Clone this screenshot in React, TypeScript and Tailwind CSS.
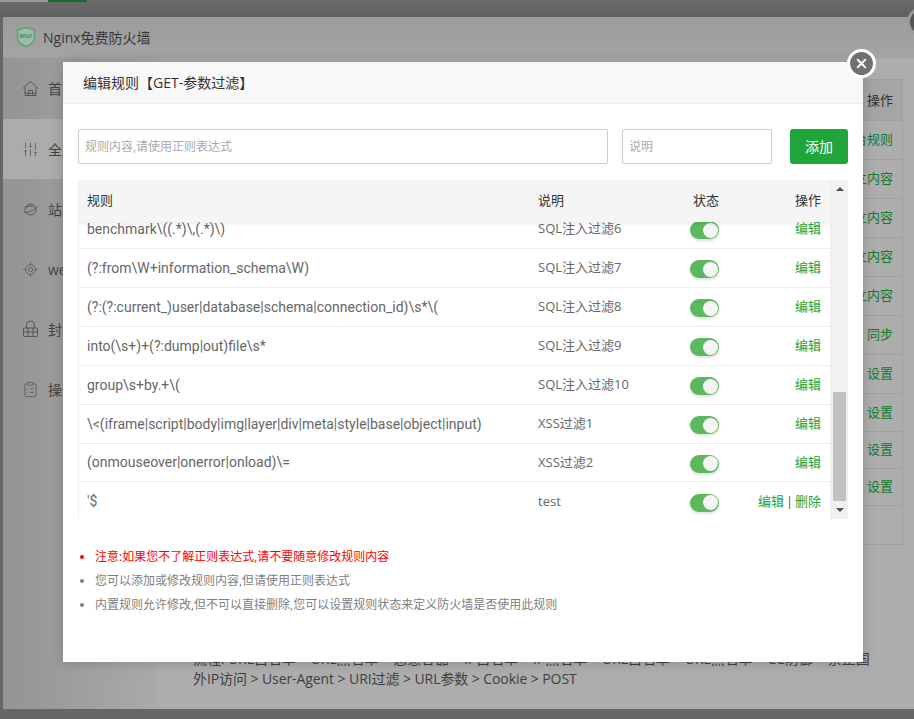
import React from "react";
import { SlidersVertical, LocateFixed, ClipboardList, X } from "lucide-react";

const font = { fontFamily: '"Open Sans","Noto Sans CJK SC",sans-serif' };
const ruleFont = { fontFamily: 'Roboto,"Noto Sans CJK SC",sans-serif' };

function HomeIcon() {
  return (
    <svg width="17" height="17" viewBox="0 0 17 17" fill="none" stroke="currentColor" strokeWidth="1">
      <path d="M0.800 8.500 8.500 1.500l7.700 7" />
      <path d="M3 7.500V15.500h11V7.500" />
      <path d="M6.500 15.500V10.500h4v5" />
      <path d="M3 13.200h11" />
    </svg>
  );
}

function Planet() {
  return (
    <svg width="17" height="17" viewBox="0 0 17 17" fill="none" stroke="currentColor" strokeWidth="1">
      <circle cx="8.500" cy="8.500" r="5.500" />
      <path d="M1.500 11c3 1.500 10-1 14-5.500" />
      <path d="M3.500 6.500c2-1.500 5-2 8-1" />
    </svg>
  );
}

function LockIcon() {
  return (
    <svg width="17" height="18" viewBox="0 0 17 18" fill="none" stroke="currentColor" strokeWidth="1">
      <path d="M4.500 8V5a4 4 0 0 1 8 0v3" />
      <rect x="1.500" y="8" width="14" height="8.500" rx="1" />
      <path d="M1.500 12h14M6 8v8.500M11 8v8.500" />
    </svg>
  );
}

function Logo() {
  return (
    <svg width="20" height="22" viewBox="0 0 20 22" fill="none">
      <path d="M10 1.500 18.500 4v7c0 5-3.500 8-8.500 9.500C5 19 1.500 16 1.500 11V4z" stroke="#5f9f73" strokeWidth="1.500" fill="#9dbda6" />
      <text x="10" y="12" textAnchor="middle" fontSize="6" fontWeight="700" fill="#4f8a62" fontFamily="Liberation Sans">WAF</text>
    </svg>
  );
}

const navItems = [
  { label: "首页", icon: <HomeIcon />, h: "h-[61px]", active: false },
  { label: "全局配置", icon: <SlidersVertical size={17} strokeWidth={1.1} />, h: "h-[60px]", active: true },
  { label: "站点配置", icon: <Planet />, h: "h-[60px]", active: false },
  { label: "web日志", icon: <LocateFixed size={17} strokeWidth={1.1} />, h: "h-[60px]", active: false },
  { label: "封锁历史", icon: <LockIcon />, h: "h-[60px]", active: false },
  { label: "操作日志", icon: <ClipboardList size={17} strokeWidth={1.1} />, h: "h-[60px]", active: false },
];

const bgRows = [
  { t: "台规则", h: "h-[39px]" },
  { t: "立内容", h: "h-[39px]" },
  { t: "立内容", h: "h-[39px]" },
  { t: "立内容", h: "h-[39px]" },
  { t: "立内容", h: "h-[39px]" },
  { t: "同步", h: "h-[39px]" },
  { t: "设置", h: "h-[39px]" },
  { t: "设置", h: "h-[38px]" },
  { t: "设置", h: "h-[37px]" },
  { t: "设置", h: "h-[37px]" },
  { t: "", h: "h-[38px]" },
];

const rules = [
  ["benchmark\\((.*)\\,(.*)\\)", "SQL注入过滤6"],
  ["(?:from\\W+information_schema\\W)", "SQL注入过滤7"],
  ["(?:(?:current_)user|database|schema|connection_id)\\s*\\(", "SQL注入过滤8"],
  ["into(\\s+)+(?:dump|out)file\\s*", "SQL注入过滤9"],
  ["group\\s+by.+\\(", "SQL注入过滤10"],
  ["\\<(iframe|script|body|img|layer|div|meta|style|base|object|input)", "XSS过滤1"],
  ["(onmouseover|onerror|onload)\\=", "XSS过滤2"],
  ["'$", "test"],
];

function Toggle() {
  return (
    <div className="mt-[2px] flex h-[18px] w-[29px] items-center justify-end rounded-full bg-[#5cb85c] pr-px shadow-[0_2px_3px_rgba(0,0,0,0.12)]">
      <div className="h-[15px] w-[15px] rounded-full bg-[#f5f5f5]" />
    </div>
  );
}

export default function App() {
  return (
    <div style={font} className="relative h-[719px] w-full overflow-hidden bg-[#666666]">
      <div className="h-[17px] bg-gradient-to-b from-[#6b6b6b] to-[#5f5f5f]">
        <div className="flex h-[2px] w-[87px]">
          <div className="w-[48px] bg-[#8f9f8f]" />
          <div className="w-[39px] bg-[#1a6b2a]" />
        </div>
      </div>

      {/* dimmed page behind */}
      <div className="ml-[3px] flex h-[692px] flex-col bg-[#a9a9a9]">
        <div className="flex h-[41px] items-center gap-[7px] border-b border-[#a0a0a0] bg-gradient-to-b from-[#9c9c9c] to-[#a4a4a4] pl-[13px] text-[14px] text-[#383838]">
          <Logo />
          <span>Nginx免费防火墙</span>
        </div>
        <div className="flex min-h-0 flex-1">
          <div className="w-[155px] bg-gradient-to-r from-[#949494] to-[#aaaaaa]">
            {navItems.map((n) => (
              <div key={n.label} className={`flex items-center gap-[9px] pl-[19px] text-[14px] text-[#444444] ${n.h} ${n.active ? "bg-[#acacac]" : ""}`}>
                <span className="text-[#555555]">{n.icon}</span>
                <span>{n.label}</span>
              </div>
            ))}
          </div>
          <div className="flex-1 bg-[#adadad] pl-[35px] pr-[11px] pt-[21px]">
            <div className="ml-auto w-[230px] border border-[#a0a0a0] text-[13px]">
              <div className="flex h-[41px] items-center justify-end border-b border-[#a0a0a0] bg-[#a5a5a5] pb-px pr-[9px] pt-[2px] text-[#333333]">操作</div>
              {bgRows.map((r, i) => (
                <div key={i} className={`flex items-center justify-end border-b border-[#a0a0a0] pr-[9px] text-[#137a2a] last:border-b-0 ${r.h}`}>{r.t}</div>
              ))}
            </div>
            <p className="mt-[104px] whitespace-nowrap text-[14px] leading-[20px] tracking-[-0.08px] text-[#3f3f3f]">
              流程: URL白名单 &gt; URL黑名单 &gt; 恶意容器 &gt; IP白名单 &gt; IP黑名单 &gt; URL白名单 &gt; URL黑名单 &gt; CC防御 &gt; 禁止国
              <br />
              外IP访问 &gt; User-Agent &gt; URI过滤 &gt; URL参数 &gt; Cookie &gt; POST
            </p>
          </div>
        </div>
      </div>

      {/* outer close button peeking in */}
      <div className="absolute left-[907px] top-[7px] h-[30px] w-[30px] rounded-full border-[3px] border-[#9a9a9a] bg-[#555555]" />

      {/* modal */}
      <div className="absolute left-[63px] top-[62px] flex h-[600px] w-[800px] flex-col bg-white shadow-[0_0_12px_rgba(0,0,0,0.2)]">
        <div className="flex h-[42px] items-center border-b border-[#eeeeee] bg-[#f8f8f8] pl-[20px] text-[14px] text-[#333333]">编辑规则【GET-参数过滤】</div>

        <div className="mt-[25px] flex h-[35px] pl-[15px] pr-[15px]">
          <input readOnly placeholder="规则内容,请使用正则表达式" className="h-[35px] w-[530px] rounded-[2px] border border-[#cccccc] pl-[6px] text-[12px] text-[#555555] placeholder:text-[#aaaaaa]" />
          <input readOnly placeholder="说明" className="ml-[14px] h-[35px] w-[150px] rounded-[2px] border border-[#cccccc] pl-[6px] text-[12px] placeholder:text-[#aaaaaa]" />
          <button className="ml-[18px] h-[35px] w-[58px] rounded-[3px] bg-[#20a53a] text-[14px] text-white">添加</button>
        </div>

        <div className="ml-[15px] mt-[16px] flex h-[339px] w-[770px] bg-[#f1f1f1]">
          <div className="relative flex w-[753px] flex-col overflow-hidden border-x border-[#eeeeee] bg-white">
            <div className="relative z-10 flex h-[42px] shrink-0 items-center bg-[#f5f5f5] text-[13px] text-[#333333] shadow-[0_2px_4px_rgba(0,0,0,0.08)]">
              <span className="ml-[8px] w-[451px]">规则</span>
              <span className="w-[155px]">说明</span>
              <span className="w-[102px]">状态</span>
              <span>操作</span>
            </div>
            <div className="-mt-[12px]">
              {rules.map(([r, d], i) => (
                <div key={i} className={`flex items-center border-b border-[#eeeeee] text-[13px] text-[#666666] last:border-b-0 ${i === 6 ? "h-[38px]" : "h-[39px]"}`}>
                  <span style={ruleFont} className="ml-[8px] w-[451px] whitespace-nowrap text-[14px]">{r}</span>
                  <span className="w-[152px]">{d}</span>
                  <span className="w-[68px]"><Toggle /></span>
                  <span className="flex w-[63px] justify-end whitespace-nowrap text-[#20a53a]">
                    {i === rules.length - 1 && (
                      <>
                        <span>编辑</span>
                        <span className="w-[11px] text-center text-[#555555]">|</span>
                        <span>删除</span>
                      </>
                    )}
                    {i !== rules.length - 1 && <span>编辑</span>}
                  </span>
                </div>
              ))}
            </div>
          </div>
          <div className="flex w-[17px] flex-col items-center">
            <div className="flex h-[17px] w-full items-center justify-center">
              <div className="border-x-[4px] border-b-[4px] border-x-transparent border-b-[#505050]" />
            </div>
            <div className="flex min-h-0 flex-1 flex-col justify-end">
              <div className="h-[109px] w-[13px] bg-[#c1c1c1]" />
            </div>
            <div className="flex h-[18px] w-full items-center justify-center">
              <div className="border-x-[4px] border-t-[4px] border-x-transparent border-t-[#505050]" />
            </div>
          </div>
        </div>

        <ul className="ml-[32px] mt-[26px] list-disc text-[12px] leading-[24px] text-[#808080] marker:text-[#808080]">
          <li className="text-[#ff0000] marker:text-[#ff0000]">注意:如果您不了解正则表达式,请不要随意修改规则内容</li>
          <li>您可以添加或修改规则内容,但请使用正则表达式</li>
          <li>内置规则允许修改,但不可以直接删除,您可以设置规则状态来定义防火墙是否使用此规则</li>
        </ul>

        <div className="absolute -right-[10px] -top-[10px] flex h-[23px] w-[23px] items-center justify-center rounded-full bg-[#707070] outline-[3px] outline-white">
          <X size={15} strokeWidth={3} color="#ffffff" />
        </div>
      </div>
    </div>
  );
}
